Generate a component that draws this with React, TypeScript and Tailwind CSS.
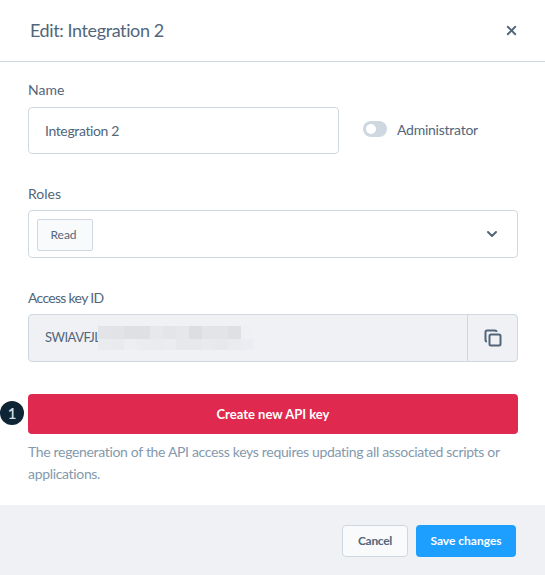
import { ChevronDown, X } from 'lucide-react';

const topBlur = ['#e3e4e8', '#e2e3e7', '#dfe0e4', '#dfe0e4', '#e7e8ec', '#e4e5e9', '#e6e7eb', '#dddee2', '#e3e4e8', '#e3e4e8', '#dfe0e4', '#eff0f4'];
const bottomBlur = ['#e9ebee', '#e8eaee', '#edeef2', '#ebecf0', '#e9ebee', '#ebecf0', '#e6e8ec', '#e6e8ec', '#e8eaed', '#e6e8ec', '#e9ebee', '#ecedf2'];

const labelClass = 'text-[14px] leading-[18px] text-[#52667a]';

const App = () => {
  return (
    <div className="w-[545px] h-[575px] bg-white font-['Lato',sans-serif] flex flex-col overflow-hidden">
      <header className="h-[62px] shrink-0 border-b border-[#cfd8e0] flex items-center justify-between pl-[30px] pr-[26px]">
        <h1 className="text-[18px] tracking-[-0.4px] text-[#52667a]">Edit: Integration 2</h1>
        <X size={15} strokeWidth={3} className="text-[#52667a]" />
      </header>

      <main className="flex-1 pl-[28px] pr-[27px] pt-[19px] relative">
        <label className={`${labelClass} block mb-[8px]`}>Name</label>
        <div className="flex items-center">
          <div className="w-[311px] h-[47px] border border-[#cfd8e0] rounded-[4px] flex items-center pb-[1px] pl-[16px] text-[14px] tracking-[-0.38px] text-[#52667a]">
            Integration 2
          </div>
          <div className="ml-[24px] mb-[3px] w-[24px] h-[16px] rounded-full bg-[#cfd8e0] flex items-center pl-[3px]">
            <span className="w-[10px] h-[10px] rounded-full bg-white" />
          </div>
          <span className="ml-[10px] mb-[3px] text-[14px] tracking-[-0.25px] text-[#52667a]">Administrator</span>
        </div>

        <label className={`${labelClass} block mt-[31px] mb-[7px]`}>Roles</label>
        <div className="w-[490px] h-[48px] border border-[#cfd8e0] rounded-[4px] flex items-center justify-between pl-[8px] pr-[17px]">
          <span className="mt-[1px] w-[56px] h-[32px] bg-[#f9fafc] border border-[#cfd8e0] rounded-[2px] flex items-center justify-center pr-[3px] text-[12px] text-[#52667a]">
            Read
          </span>
          <ChevronDown size={16} strokeWidth={3} className="text-[#52667a]" />
        </div>

        <label className={`${labelClass} block mt-[31px] mb-[7px] tracking-[-0.7px]`}>Access key ID</label>
        <div className="w-[490px] h-[48px] border border-[#cfd8e0] rounded-[4px] bg-[#eff1f5] flex items-center">
          <div className="flex-1 flex items-center pl-[16px] text-[13px] tracking-[-0.5px] text-[#52667a]">
            <span className="w-[53px] whitespace-nowrap">SWIAVFJL</span>
            <div className="flex flex-col">
              <div className="flex">
                {topBlur.map((color, i) => (
                  <span key={i} className="w-[13px] h-[13px]" style={{ backgroundColor: color }} />
                ))}
              </div>
              <div className="flex">
                {bottomBlur.map((color, i) => (
                  <span key={i} className="w-[13px] h-[11px]" style={{ backgroundColor: color }} />
                ))}
              </div>
            </div>
          </div>
          <div className="w-[50px] h-full border-l border-[#cfd8e0] flex items-center justify-center">
            <svg width="18" height="18" viewBox="0 0 18 18" fill="none" stroke="#52667a" strokeWidth="2">
              <path d="M3 12.5C2 12.5 1.5 12 1.5 11V3C1.5 2 2 1.5 3 1.5H11C12 1.5 12.5 2 12.5 3" />
              <rect x="5.5" y="5.5" width="11" height="11" rx="1.5" />
            </svg>
          </div>
        </div>

        <div className="relative mt-[32px]">
          <span className="absolute left-[-28px] top-[7px] w-[24px] h-[24px] rounded-full bg-[#0d2535] flex items-center justify-center text-[15px] font-semibold text-[#d5dde3]">
            1
          </span>
          <button className="w-[490px] h-[40px] rounded-[4px] bg-[#df294e] pt-[1px] text-[13px] font-bold text-white">
            Create new API key
          </button>
        </div>
        <p className="mt-[7px] w-[490px] text-[14px] leading-[22px] tracking-[-0.33px] text-[#8499ad]">
          The regeneration of the API access keys requires updating all associated scripts or applications.
        </p>
      </main>

      <footer className="h-[70px] shrink-0 bg-[#eff1f5] flex items-start justify-end gap-[8px] pt-[20px] pr-[29px]">
        <button className="w-[66px] h-[32px] rounded-[4px] border border-[#cfd8e0] bg-[#f9fafc] text-[12px] font-bold tracking-[-0.3px] text-[#52667a]">
          Cancel
        </button>
        <button className="w-[100px] h-[32px] rounded-[4px] bg-[#1c9fff] text-[12px] font-bold text-white">
          Save changes
        </button>
      </footer>
    </div>
  );
};

export default App;
